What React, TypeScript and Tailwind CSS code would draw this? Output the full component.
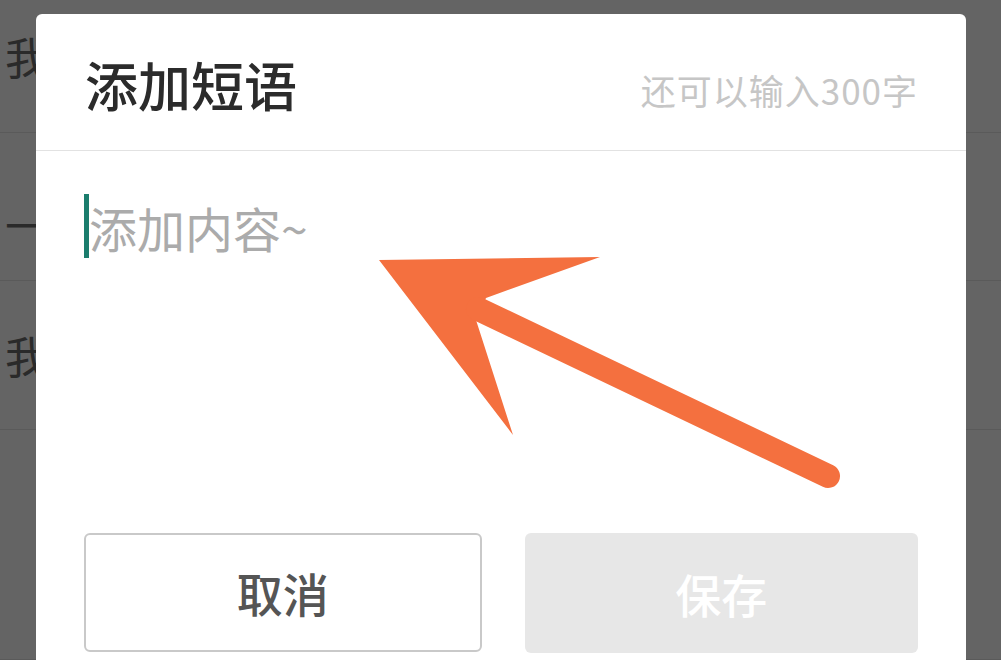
import React from 'react';

const rows = [
  { text: '我', h: 'h-[133px]', pt: 'pt-[34px]' },
  { text: '一', h: 'h-[148px]', pt: 'pt-[69px]' },
  { text: '我', h: 'h-[149px]', pt: 'pt-[52px]' },
  { text: '', h: 'h-[230px]', pt: 'pt-0' },
];

const Arrow: React.FC = () => (
  <svg className="absolute inset-0 pointer-events-none" width="1001" height="660" viewBox="0 0 1001 660">
    <polygon points="379,260 600,257 486,298 476,320 513,435" fill="#f4703f" />
    <line x1="478" y1="309" x2="828" y2="476" stroke="#f4703f" strokeWidth="24" strokeLinecap="round" />
  </svg>
);

const App: React.FC = () => {
  return (
    <div className="relative w-[1001px] h-[660px] overflow-hidden bg-[#646464] font-['Noto_Sans_CJK_SC','Noto_Sans',sans-serif]">
      {/* page underneath the dimmed overlay */}
      <div className="flex flex-col">
        {rows.map((row, i) => (
          <div key={i} className={`${row.h} ${row.pt} px-[5px] border-b border-[#5a5a5a]`}>
            <span className="block text-[44px] leading-none text-[#2a2a2a]">{row.text}</span>
          </div>
        ))}
      </div>

      {/* dialog */}
      <div className="absolute left-[36px] top-[14px] w-[930px] h-[660px] bg-white rounded-[6px] px-[48px]">
        <div className="flex justify-between items-start h-[137px] border-b border-[#e2e2e2] -mx-[48px] px-[48px]">
          <h2 className="mt-[44px] ml-[1px] text-[53px] leading-none font-medium text-[#2b2b2b]">添加短语</h2>
          <span className="mt-[58px] text-[35px] tracking-[1px] leading-none text-[#c6c6c6]">还可以输入300字</span>
        </div>

        <div className="flex items-start h-[382px] pt-[43px]">
          <div className="w-[5px] h-[64px] bg-[#1b7d6d]" />
          <span className="mt-[9px] text-[48px] leading-none text-[#ababab]">添加内容~</span>
        </div>

        <div className="flex gap-[43px]">
          <button className="flex-1 h-[119px] rounded-[6px] border-2 border-[#c9c9c9] bg-white text-[46px] font-medium text-[#555555]">
            取消
          </button>
          <button className="flex-1 h-[120px] rounded-[6px] bg-[#e7e7e7] text-[46px] font-medium text-white">
            保存
          </button>
        </div>
      </div>

      <Arrow />
    </div>
  );
};

export default App;
